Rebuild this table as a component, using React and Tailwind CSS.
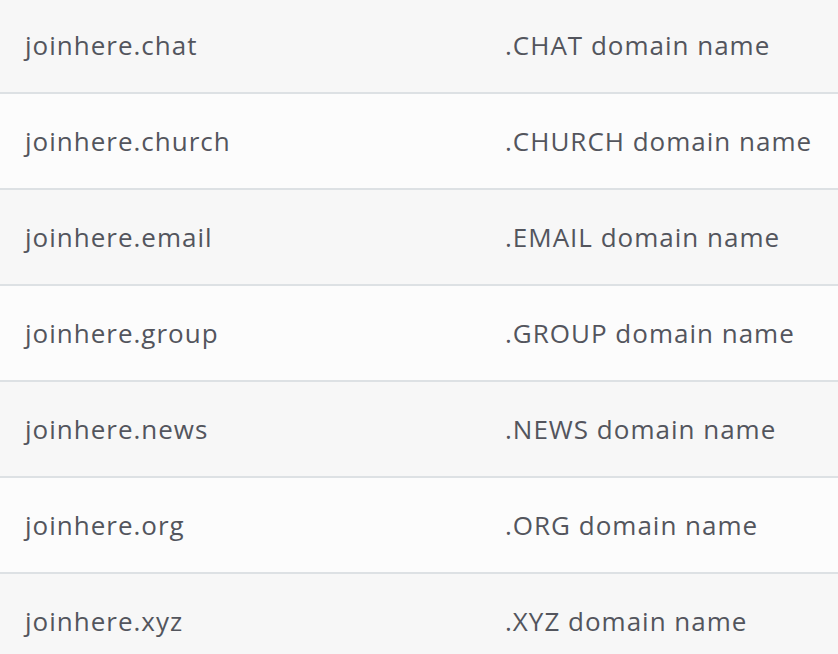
import React from "react";

const rows = [
  ["joinhere.chat", ".CHAT domain name"],
  ["joinhere.church", ".CHURCH domain name"],
  ["joinhere.email", ".EMAIL domain name"],
  ["joinhere.group", ".GROUP domain name"],
  ["joinhere.news", ".NEWS domain name"],
  ["joinhere.org", ".ORG domain name"],
  ["joinhere.xyz", ".XYZ domain name"],
];

export default function App() {
  return (
    <div
      className="w-[838px] h-[654px] overflow-hidden bg-[#fcfcfc] text-[#53555d]"
      style={{ fontFamily: "'Open Sans', Lato, sans-serif" }}
    >
      <div className="-mt-[2px]">
        {rows.map(([a, b], i) => (
          <div
            key={a}
            className={
              "grid grid-cols-[505px_1fr] items-center h-[96px] border-b-2 border-[#dde1e4] text-[26px] tracking-[1px] " +
              (i % 2 === 0 ? "bg-[#f7f7f7]" : "bg-[#fcfcfc]")
            }
          >
            <div className="pl-[25px] whitespace-nowrap">{a}</div>
            <div className="whitespace-nowrap">{b}</div>
          </div>
        ))}
      </div>
    </div>
  );
}
